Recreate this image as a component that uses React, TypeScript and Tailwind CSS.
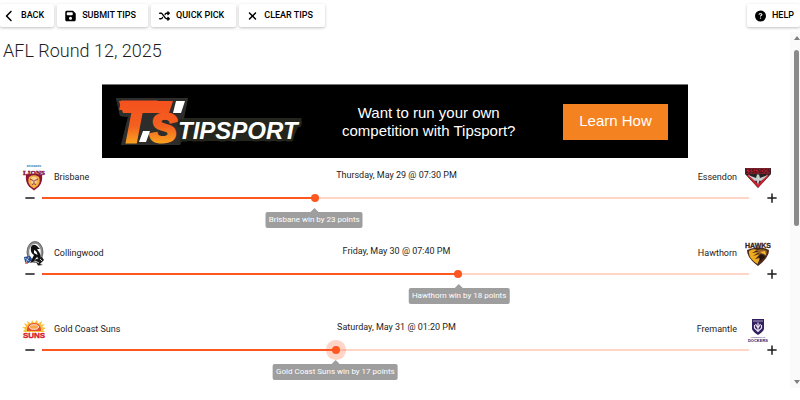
import React, { useState } from "react";
import {
  FaChevronLeft,
  FaCircleQuestion,
  FaFloppyDisk,
  FaMinus,
  FaPlus,
  FaShuffle,
  FaXmark,
} from "react-icons/fa6";

interface Match {
  id: number;
  home: string;
  away: string;
  homeLogo: React.ReactNode;
  awayLogo: React.ReactNode;
  kickoff: string;
  tip: number;
}

function LionsLogo() {
  return (
    <svg viewBox="0 0 24 26" className="h-[26px] w-6" aria-hidden="true">
      <text x="12" y="2" textAnchor="middle" fontSize="3" fontWeight="700" fill="#3b87b8" fontFamily="Roboto, sans-serif">BRISBANE</text>
      <path d="M4 10 Q12 7 20 10 Q21 17 17 21.500 L12 25.500 L7 21.500 Q3 17 4 10Z" fill="#8a1538" />
      <path d="M7 12 Q12 8 17 12 Q19 17 15.500 21 L12 23.500 L8.500 21 Q5 17 7 12Z" fill="#f0b040" />
      <path d="M9 13 Q12 10.500 15 13 L14.500 18 L12 20.500 L9.500 18Z" fill="#f6d49a" />
      <path d="M8 14 L11 15.500 M16 14 L13 15.500 M10 19.500 Q12 18 14 19.500 M12 15 V18.500" stroke="#7a1030" strokeWidth="0.800" fill="none" />
      <text x="12" y="9.500" textAnchor="middle" fontSize="7" fontWeight="700" fill="#8a1538" stroke="#8a1538" strokeWidth="0.400" fontFamily="Liberation Serif, serif">LIONS</text>
    </svg>
  );
}

function MagpiesLogo() {
  return (
    <svg viewBox="0 0 24 26" className="h-[26px] w-6" aria-hidden="true">
      <ellipse cx="13" cy="11" rx="7" ry="9.500" fill="#fff" stroke="#8d8d8d" strokeWidth="2.500" />
      <ellipse cx="13" cy="11" rx="8" ry="10.500" fill="none" stroke="#444" strokeWidth="0.500" />
      <path d="M9 6 Q11 2 15 5 L18 8 L15 8 Q20 14 18 19 L15 16 L11 21 L8 22 L12 14 Q8 12 9 6Z" fill="#111" />
      <path d="M12 9 Q15 10 15.500 14 L12 12Z" fill="#fff" />
      <path d="M2 16 L8 15 L10 18 L7 22 L3 21Z" fill="#244a91" />
      <path d="M3 17 L7 20 M7 16 L4 21" stroke="#fff" strokeWidth="0.600" />
      <path d="M3 22 L6 22" stroke="#d33b32" strokeWidth="1.300" />
      <path d="M12 19 L20 16 L22 19 L18 23 L21 24 L16 24.500 L14 21Z" fill="#1b1b1b" />
      <path d="M13 20 L17 22 M18 18 L20 20" stroke="#fff" strokeWidth="0.800" />
    </svg>
  );
}

function SunsLogo() {
  return (
    <svg viewBox="0 0 24 26" className="h-[26px] w-6" aria-hidden="true">
      <path d="M1 15 L3 12 L0 10 L4 10 L2 6 L6 8 L5 4 L9 6.500 L10 3 L12 6 L15 3 L16 6.500 L20 4 L19 8 L23 7 L20 10 L24 11 L21 13 L23 15Z" fill="#f8c33b" />
      <path d="M5 14 Q5 6 12 6 Q19 6 19 14Z" fill="#e64b2d" />
      <ellipse cx="12" cy="10" rx="4.500" ry="2.300" fill="#f6a64a" stroke="#fff" strokeWidth="0.800" />
      <text x="12" y="20.500" textAnchor="middle" fontSize="8" fontWeight="700" fill="#d4212c" stroke="#d4212c" strokeWidth="0.400" fontFamily="Liberation Sans, sans-serif">SUNS</text>
    </svg>
  );
}

function BombersLogo() {
  return (
    <svg viewBox="0 0 26 22" className="h-[22px] w-[26px]" aria-hidden="true">
      <path d="M0 1 H26 V7 L13 21 L0 7Z" fill="#252222" />
      <path d="M3 8 L13 19 L23 8" fill="none" stroke="#ce2030" strokeWidth="2.200" />
      <path d="M3 8 L11 11 L12 7.500 H14 L15 11 L23 8 L16 14 L14.500 13.500 L13 18 L11.500 13.500 L10 14Z" fill="#c9cdcd" />
      <path d="M0.500 1.500 H25.500 V6.500 H0.500Z" fill="#c91d32" />
      <text x="13" y="5.500" textAnchor="middle" fontSize="4.500" fontWeight="700" fill="#1c1113" fontFamily="Liberation Sans, sans-serif">ESSENDON</text>
    </svg>
  );
}

function HawksLogo() {
  return (
    <svg viewBox="0 0 26 26" className="h-[26px] w-[26px]" aria-hidden="true">
      <path d="M2 9 Q13 4 24 9 Q24 17 13 25 Q2 17 2 9Z" fill="#482a1c" />
      <path d="M4 10 Q8 7 12 9 L7 12 L14 11 L8 15 L15 13 L10 18 L15 17 L12.500 23 Q3 17 4 10Z" fill="#efab20" />
      <path d="M12 9 Q18 7 22 10 L21 15 Q18 12 14 13Z" fill="#9a6425" />
      <path d="M15 11 L20 10 L21 14 L18 12.500Z" fill="#f5ba32" />
      <path d="M14 14 Q18 13 20 16 L15 20Z" fill="#26150f" />
      <text x="13" y="6.500" textAnchor="middle" fontSize="7" fontWeight="700" fill="#3c2218" stroke="#3c2218" strokeWidth="0.300" fontFamily="Liberation Sans, sans-serif">HAWKS</text>
    </svg>
  );
}

function DockersLogo() {
  return (
    <svg viewBox="0 0 26 26" className="h-[26px] w-[26px]" aria-hidden="true">
      <path d="M7 2 H19 V12 Q18 15 13 18 Q8 15 7 12Z" fill="#33205f" />
      <path d="M8 4 H18" stroke="#c8c2dc" strokeWidth="0.800" />
      <path d="M13 5.500 V15 M9.500 8 V11 L13 14.500 L16.500 11 V8 M10.500 7 L13 11 L15.500 7" stroke="#e5e1ef" strokeWidth="1.200" fill="none" />
      <text x="13" y="20.500" textAnchor="middle" fontSize="2.500" fontWeight="700" fill="#6b628a" fontFamily="Roboto, sans-serif">FREMANTLE</text>
      <text x="13" y="24.500" textAnchor="middle" fontSize="4" fontWeight="700" fill="#33205f" fontFamily="Liberation Sans, sans-serif">DOCKERS</text>
    </svg>
  );
}

function TipsportLogo() {
  return (
    <svg viewBox="0 0 204 73" className="h-[73px] w-[204px]" role="img" aria-label="Tipsport">
      <defs>
        <linearGradient id="flame" x1="0" y1="16" x2="0" y2="58" gradientUnits="userSpaceOnUse">
          <stop offset="0" stopColor="#f4511e" />
          <stop offset="0.600" stopColor="#f4601f" />
          <stop offset="1" stopColor="#f9a11f" />
        </linearGradient>
      </defs>
      <path d="M14 13 H86 L82 33 H200 L190 56 H80 L78 60 H19 L26 32 L18 31Z" fill="#24251c" />
      <path d="M14 13 H86 L82 33 L78 60 H19 L26 32 L18 31Z" fill="#2d2e2c" />
      <path d="M17 16 H71 L67 28 H21Z" fill="url(#flame)" />
      <text x="15" y="57" fontSize="57" fontWeight="700" fontStyle="italic" fill="url(#flame)" stroke="url(#flame)" strokeWidth="3" fontFamily="Liberation Sans, sans-serif">T</text>
      <text x="48" y="57" fontSize="40" fontWeight="700" fontStyle="italic" fill="url(#flame)" stroke="url(#flame)" strokeWidth="3" fontFamily="Liberation Sans, sans-serif">S</text>
      <path d="M74 16 H83 L79 28 H71Z M41 46 H48 L44 57 H37Z" fill="#fff" />
      <text x="76" y="54" fontSize="24" fontWeight="700" fontStyle="italic" fill="#fff" stroke="#24251c" strokeWidth="5" strokeLinejoin="round" paintOrder="stroke" fontFamily="Liberation Sans, sans-serif">TIPSPORT</text>
    </svg>
  );
}

const matches: Match[] = [
  { id: 1, home: "Brisbane", away: "Essendon", homeLogo: <LionsLogo />, awayLogo: <BombersLogo />, kickoff: "Thursday, May 29 @ 07:30 PM", tip: -23 },
  { id: 2, home: "Collingwood", away: "Hawthorn", homeLogo: <MagpiesLogo />, awayLogo: <HawksLogo />, kickoff: "Friday, May 30 @ 07:40 PM", tip: 18 },
  { id: 3, home: "Gold Coast Suns", away: "Fremantle", homeLogo: <SunsLogo />, awayLogo: <DockersLogo />, kickoff: "Saturday, May 31 @ 01:20 PM", tip: -17 },
];

function ToolButton({ icon, label, onClick, className = "pl-2 pr-3" }: { icon: React.ReactNode; label: string; onClick?: () => void; className?: string }) {
  return (
    <button
      type="button"
      onClick={onClick}
      className={`flex h-[23px] items-center gap-[6px] rounded-[2px] bg-white text-[9px] font-medium uppercase text-black shadow-[0_1px_3px_rgba(0,0,0,0.25)] ${className}`}
    >
      <span className="flex w-[11px] justify-center text-[12px]">{icon}</span>
      {label}
    </button>
  );
}

function MatchRow({ match, tip, active, onChange }: { match: Match; tip: number; active: boolean; onChange: (tip: number) => void }) {
  const percent = (tip + 100) / 2;
  const winner = tip < 0 ? match.home : match.away;
  const label = tip === 0 ? "Draw" : `${winner} win by ${Math.abs(tip)} points`;

  return (
    <li className="h-[76px] pr-3 pl-[22px]">
      <div className="grid h-[29px] grid-cols-3 items-center pr-[7px]">
        <div className="flex items-center gap-2">
          {match.homeLogo}
          <span>{match.home}</span>
        </div>
        <p className="pb-1 text-center">{match.kickoff}</p>
        <div className="flex items-center justify-end gap-2">
          <span>{match.away}</span>
          {match.awayLogo}
        </div>
      </div>
      <div className="flex h-3 items-center">
        <button type="button" aria-label={`More to ${match.home}`} onClick={() => onChange(Math.max(-100, tip - 1))} className="w-5 text-xs">
          <FaMinus className="ml-0.5" />
        </button>
        <div className="relative flex flex-1 items-center">
          {/* range runs from -100 (home) to 100 (away) */}
          <input
            type="range"
            min={-100}
            max={100}
            value={tip}
            onChange={(e) => onChange(Number(e.target.value))}
            aria-label={`${match.home} v ${match.away}`}
            className={`h-2 w-full cursor-pointer appearance-none bg-[length:100%_2px] bg-center bg-no-repeat outline-none [&::-webkit-slider-thumb]:size-2 [&::-webkit-slider-thumb]:appearance-none [&::-webkit-slider-thumb]:rounded-full [&::-webkit-slider-thumb]:bg-[#ff5722] ${
              active ? "[&::-webkit-slider-thumb]:shadow-[0_0_0_6px_rgba(255,87,34,0.25)]" : ""
            }`}
            style={{ backgroundImage: `linear-gradient(to right, #ff5722 ${percent}%, #ffd5c8 ${percent}%)` }}
          />
          <output
            className="absolute top-[18px] -translate-x-1/2 rounded-[2px] bg-[#9e9e9e] px-[3px] text-[8px] leading-4 whitespace-nowrap text-white before:absolute before:-top-1 before:left-1/2 before:-translate-x-1/2 before:border-x-4 before:border-b-4 before:border-x-transparent before:border-b-[#9e9e9e]"
            style={{ left: `${percent}%` }}
          >
            {label}
          </output>
        </div>
        <button type="button" aria-label={`More to ${match.away}`} onClick={() => onChange(Math.min(100, tip + 1))} className="flex w-[29px] justify-end text-xs">
          <FaPlus />
        </button>
      </div>
    </li>
  );
}

function App() {
  const [tips, setTips] = useState<number[]>(matches.map((m) => m.tip));
  const [active, setActive] = useState<number>(2);

  const changeTip = (index: number, tip: number) => {
    setTips(tips.map((t, i) => (i === index ? tip : t)));
    setActive(index);
  };

  const quickPick = () => setTips(tips.map(() => Math.round(Math.random() * 80) - 40));

  return (
    <div className="h-screen overflow-hidden bg-white font-[Roboto,sans-serif] text-[9px] text-[#1d1d1d]">
      <header className="flex gap-[3px] pt-1">
        <ToolButton icon={<FaChevronLeft />} label="Back" className="pr-[10px] pl-1" />
        <ToolButton icon={<FaFloppyDisk />} label="Submit tips" />
        <ToolButton icon={<FaShuffle />} label="Quick pick" onClick={quickPick} />
        <ToolButton icon={<FaXmark />} label="Clear tips" onClick={() => setTips(tips.map(() => 0))} />
        <ToolButton icon={<FaCircleQuestion />} label="Help" className="ml-auto pr-[6px] pl-2" />
      </header>

      <div className="mt-[5px] flex">
        <main className="flex-1">
          <h1 className="pt-[5px] pl-[3px] text-[18px] leading-7 font-light">AFL Round 12, 2025</h1>

          <section className="mx-auto mt-[19px] flex h-[74px] w-[586px] max-w-full items-center border-t border-[#777] bg-black font-['Liberation_Sans',sans-serif] text-[15px] text-white">
            <TipsportLogo />
            <p className="ml-9 text-center leading-[18px]">
              Want to run your own
              <br />
              competition with Tipsport?
            </p>
            <a href="#learn" className="mr-5 ml-auto flex h-9 w-[105px] items-center justify-center bg-[#f58220]">
              Learn How
            </a>
          </section>

          <ul className="mt-[5px]">
            {matches.map((match, i) => (
              <MatchRow key={match.id} match={match} tip={tips[i]} active={i === active} onChange={(tip) => changeTip(i, tip)} />
            ))}
          </ul>
        </main>

        {/* scrollbar */}
        <div aria-hidden="true" className="flex h-[356px] w-[10px] flex-col items-center bg-[#fafafa] py-1 pl-[3px]">
          <span className="border-x-[3px] border-b-4 border-x-transparent border-b-[#7f7f7f]" />
          <span className="mt-[10px] h-44 w-[5px] rounded-full bg-[#8a8a8a]" />
          <span className="mt-auto border-x-[3px] border-t-4 border-x-transparent border-t-[#7f7f7f]" />
        </div>
      </div>
    </div>
  );
}

export default App;
